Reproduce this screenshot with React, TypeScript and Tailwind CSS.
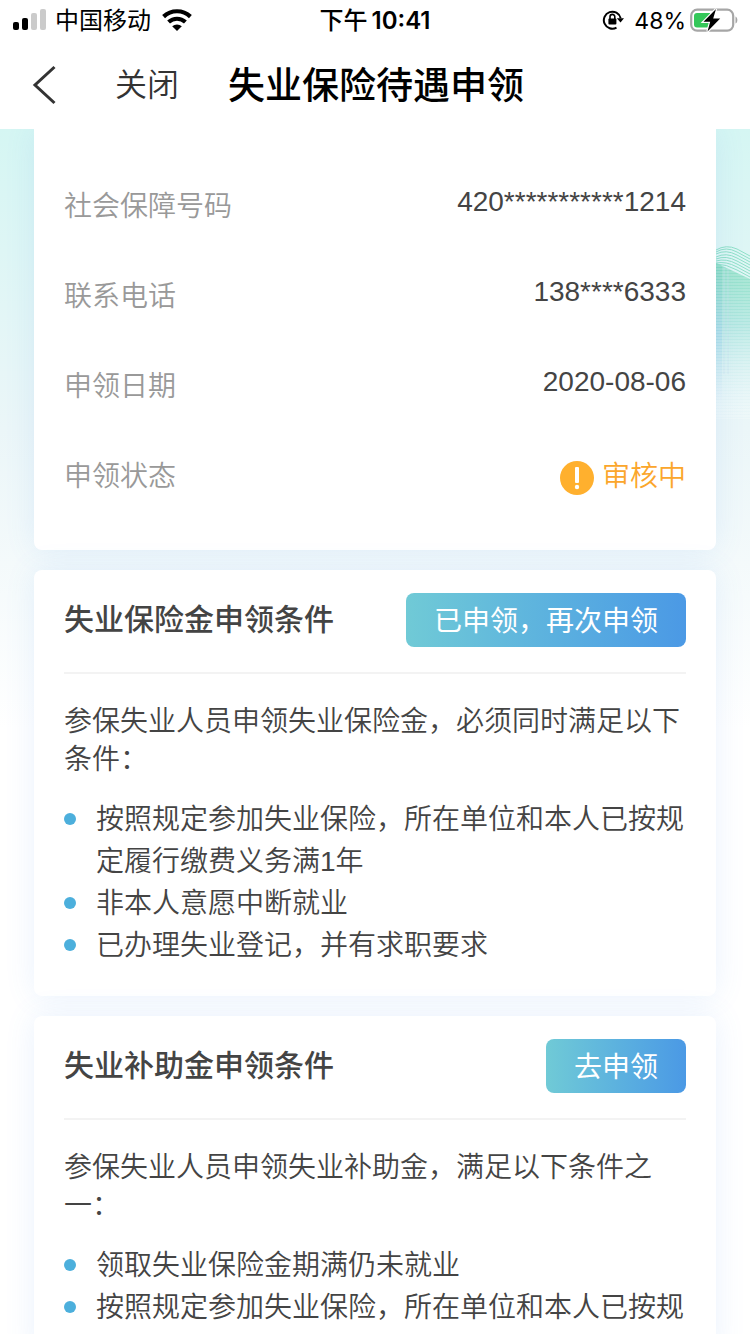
import type { ReactNode } from 'react';

interface ConditionCardProps {
  title: string;
  action: string;
  intro: string;
  items: string[];
}

interface InfoRowProps {
  label: string;
  children: ReactNode;
}

function StatusBar() {
  return (
    <div className="flex h-10 shrink-0 items-center justify-between px-3 text-2xl text-black">
      <div className="flex flex-1 items-center">
        <svg className="h-5 w-9 overflow-visible" viewBox="0 0 36 20" aria-hidden="true">
          <rect x="1" y="12" width="6" height="8" rx="2" />
          <rect x="10" y="8" width="6" height="12" rx="2" />
          <rect x="19" y="3" width="6" height="17" rx="2" fill="#cbcbcb" />
          <rect x="28" y="-1" width="6" height="21" rx="2" fill="#cbcbcb" />
        </svg>
        <span className="ml-[7px] pt-0.5">中国移动</span>
        <svg className="ml-[11px] h-[22px] w-[30px]" viewBox="0 0 30 22" aria-hidden="true">
          <g fill="none" stroke="#000" strokeWidth="4.2">
            <path d="M1.6 7.6 A19.5 19.5 0 0 1 28.4 7.6" />
            <path d="M6.6 13 A12.5 12.5 0 0 1 23.4 13" />
          </g>
          <path d="M10.2 17.2 A7.4 7.4 0 0 1 19.8 17.2 L15 22 Z" />
        </svg>
      </div>
      <div className="flex items-center pt-0.5 font-semibold">
        <span className="font-medium">下午</span>
        <span className="ml-1 font-['Inter']">10:41</span>
      </div>
      <div className="flex flex-1 items-center justify-end">
        <svg className="h-[22px] w-[22px]" viewBox="0 0 22 22" aria-hidden="true">
          <g fill="none" stroke="#000" strokeWidth="2">
            <path d="M14.5 18.6 A8.5 8.5 0 1 1 18.6 9.2" />
            <path d="M8 10 V7.8 A2.4 2.4 0 0 1 12.8 7.8 V10" strokeWidth="1.6" />
          </g>
          <rect x="6.4" y="9.6" width="8" height="6" rx="1" />
          <path d="M14.8 9.2 H22 L18.5 13.6 Z" />
        </svg>
        <span className="ml-[10px] pt-0.5 font-['Inter'] text-[23px]">48%</span>
        <svg className="ml-1 h-6 w-12" viewBox="0 0 48 24" aria-hidden="true">
          <rect x="1.2" y="1.7" width="42" height="21" rx="6" fill="#fff" stroke="#a6a6a6" strokeWidth="2.2" />
          <path d="M7 5 H20 V19.5 H7 A3 3 0 0 1 4 16.5 V8 A3 3 0 0 1 7 5 Z" fill="#34c759" />
          <path d="M45.5 8.5 C48 9.5 48 14.5 45.5 15.5 Z" fill="#a6a6a6" />
          <path d="M26 1 L13.5 13.8 H20.2 L17.5 23.5 L30.2 10.4 H23.2 Z" stroke="#fff" strokeWidth="2.4" paintOrder="stroke" />
        </svg>
      </div>
    </div>
  );
}

function NavBar() {
  return (
    <header className="flex h-[89px] shrink-0 items-center pl-8 text-[32px] leading-none">
      <button type="button" aria-label="返回">
        <svg className="h-10 w-6" viewBox="0 0 24 40" fill="none" stroke="#333" strokeWidth="3" aria-hidden="true">
          <path d="M22.5 2 L3 20 L22.5 38" />
        </svg>
      </button>
      <button type="button" className="ml-[59px] font-[350] text-[#333]">关闭</button>
      <h1 className="ml-[49px] pt-1 text-[37px] font-medium text-black">失业保险待遇申领</h1>
    </header>
  );
}

function Backdrop() {
  return (
    <div className="absolute inset-x-0 top-0 h-[600px] bg-linear-to-b from-[#d5f6f3] via-[#ebf6f8] to-white">
      <svg className="absolute right-0 top-[115px] h-[175px] w-[50px]" viewBox="0 0 50 175" fill="none" aria-hidden="true">
        <defs>
          <linearGradient id="fall" x1="0" y1="0" x2="0" y2="1">
            <stop offset="0" stopColor="#8fe0c6" />
            <stop offset="0.4" stopColor="#b0e6e0" />
            <stop offset="1" stopColor="#e4f4f9" stopOpacity="0" />
          </linearGradient>
          <linearGradient id="edge" x1="0" y1="0" x2="0" y2="1">
            <stop offset="0" stopColor="#7fd8bd" />
            <stop offset="0.5" stopColor="#a8dce6" />
            <stop offset="1" stopColor="#d8ebf7" stopOpacity="0" />
          </linearGradient>
          <pattern id="lines" width="4" height="3" patternUnits="userSpaceOnUse">
            <path d="M0 1 H4" stroke="#fff" strokeWidth="1" strokeOpacity="0.35" />
          </pattern>
        </defs>
        <path d="M16 19 L50 35 V175 H16 Z" fill="url(#fall)" />
        <path d="M16 19 L22 22 V160 H16 Z" fill="url(#edge)" />
        <path d="M24 23 V130 M28 25 V130" stroke="#c3dcf0" strokeWidth="1" opacity="0.5" />
        <path d="M16 19 L50 35 V175 H16 Z" fill="url(#lines)" />
        <g stroke="#8fe0c8" strokeWidth="1">
          <path d="M16 6 Q26 0 37 5 L50 12" />
          <path d="M16 8 Q26 2 37 8 L50 15" />
          <path d="M16 10 Q26 5 37 11 L50 18" />
          <path d="M16 13 Q26 8 37 14 L50 21" />
          <path d="M16 15 Q26 11 37 17 L50 24" />
          <path d="M16 17 Q26 14 37 20 L50 27" />
          <path d="M16 19 Q26 17 37 23 L50 30" />
          <path d="M16 20 Q26 20 37 26 L50 33" />
        </g>
      </svg>
    </div>
  );
}

function InfoRow({ label, children }: InfoRowProps) {
  return (
    <div className="flex h-[90px] items-start justify-between text-[28px]">
      <dt className="font-[350] leading-[42px] text-[#999]">{label}</dt>
      <dd className="leading-8 text-[#444]">{children}</dd>
    </div>
  );
}

function ConditionCard({ title, action, intro, items }: ConditionCardProps) {
  return (
    <section className="mt-5 rounded-lg bg-white px-[30px] pb-[29px] shadow-[0_0_30px_rgba(80,150,240,0.12)]">
      <div className="flex items-center justify-between border-b-2 border-[#f3f3f3] pb-[25px] pt-[23px]">
        <h2 className="text-[30px] font-medium leading-[54px] text-[#444]">{title}</h2>
        <button
          type="button"
          className="h-[54px] rounded-lg bg-linear-to-r from-[#70cad6] to-[#4b99e5] px-7 pt-1 text-[28px] leading-[50px] text-white"
        >
          {action}
        </button>
      </div>
      <p className="mt-[29px] text-[28px] font-[350] leading-[38px] text-[#444]">{intro}</p>
      <ul className="mt-5 text-[28px] font-[350] leading-[42px] text-[#444]">
        {items.map((item) => (
          <li key={item} className="flex items-start">
            <span className="mr-5 mt-[14px] h-3 w-3 shrink-0 rounded-full bg-[#4cafdc]" />
            <span>{item}</span>
          </li>
        ))}
      </ul>
    </section>
  );
}

export default function App() {
  return (
    <div className="flex h-screen flex-col bg-white font-['Liberation_Sans','Noto_Sans_CJK_SC',sans-serif]">
      <StatusBar />
      <NavBar />
      <main className="relative min-h-0 flex-1 overflow-y-auto [scrollbar-width:none]">
        <Backdrop />
        <div className="relative px-[34px] pb-5">
          {/* Application details */}
          <dl className="rounded-b-lg bg-white px-[30px] pb-1 pt-[57px] shadow-[0_0_30px_rgba(80,150,240,0.12)]">
            <InfoRow label="社会保障号码">420***********1214</InfoRow>
            <InfoRow label="联系电话">138****6333</InfoRow>
            <InfoRow label="申领日期">2020-08-06</InfoRow>
            <InfoRow label="申领状态">
              <span className="flex items-center gap-2 font-[350] leading-[42px] text-[#fba62c]">
                <svg className="mt-0.5 h-[34px] w-[34px]" viewBox="0 0 34 34" aria-hidden="true">
                  <circle cx="17" cy="17" r="17" fill="#ffb02e" />
                  <rect x="15" y="6" width="4" height="16" rx="1" fill="#fff" />
                  <circle cx="17" cy="26" r="2.2" fill="#fff" />
                </svg>
                审核中
              </span>
            </InfoRow>
          </dl>

          <ConditionCard
            title="失业保险金申领条件"
            action="已申领，再次申领"
            intro="参保失业人员申领失业保险金，必须同时满足以下条件："
            items={[
              '按照规定参加失业保险，所在单位和本人已按规定履行缴费义务满1年',
              '非本人意愿中断就业',
              '已办理失业登记，并有求职要求',
            ]}
          />
          <ConditionCard
            title="失业补助金申领条件"
            action="去申领"
            intro="参保失业人员申领失业补助金，满足以下条件之一："
            items={[
              '领取失业保险金期满仍未就业',
              '按照规定参加失业保险，所在单位和本人已按规',
            ]}
          />
        </div>
      </main>
    </div>
  );
}
